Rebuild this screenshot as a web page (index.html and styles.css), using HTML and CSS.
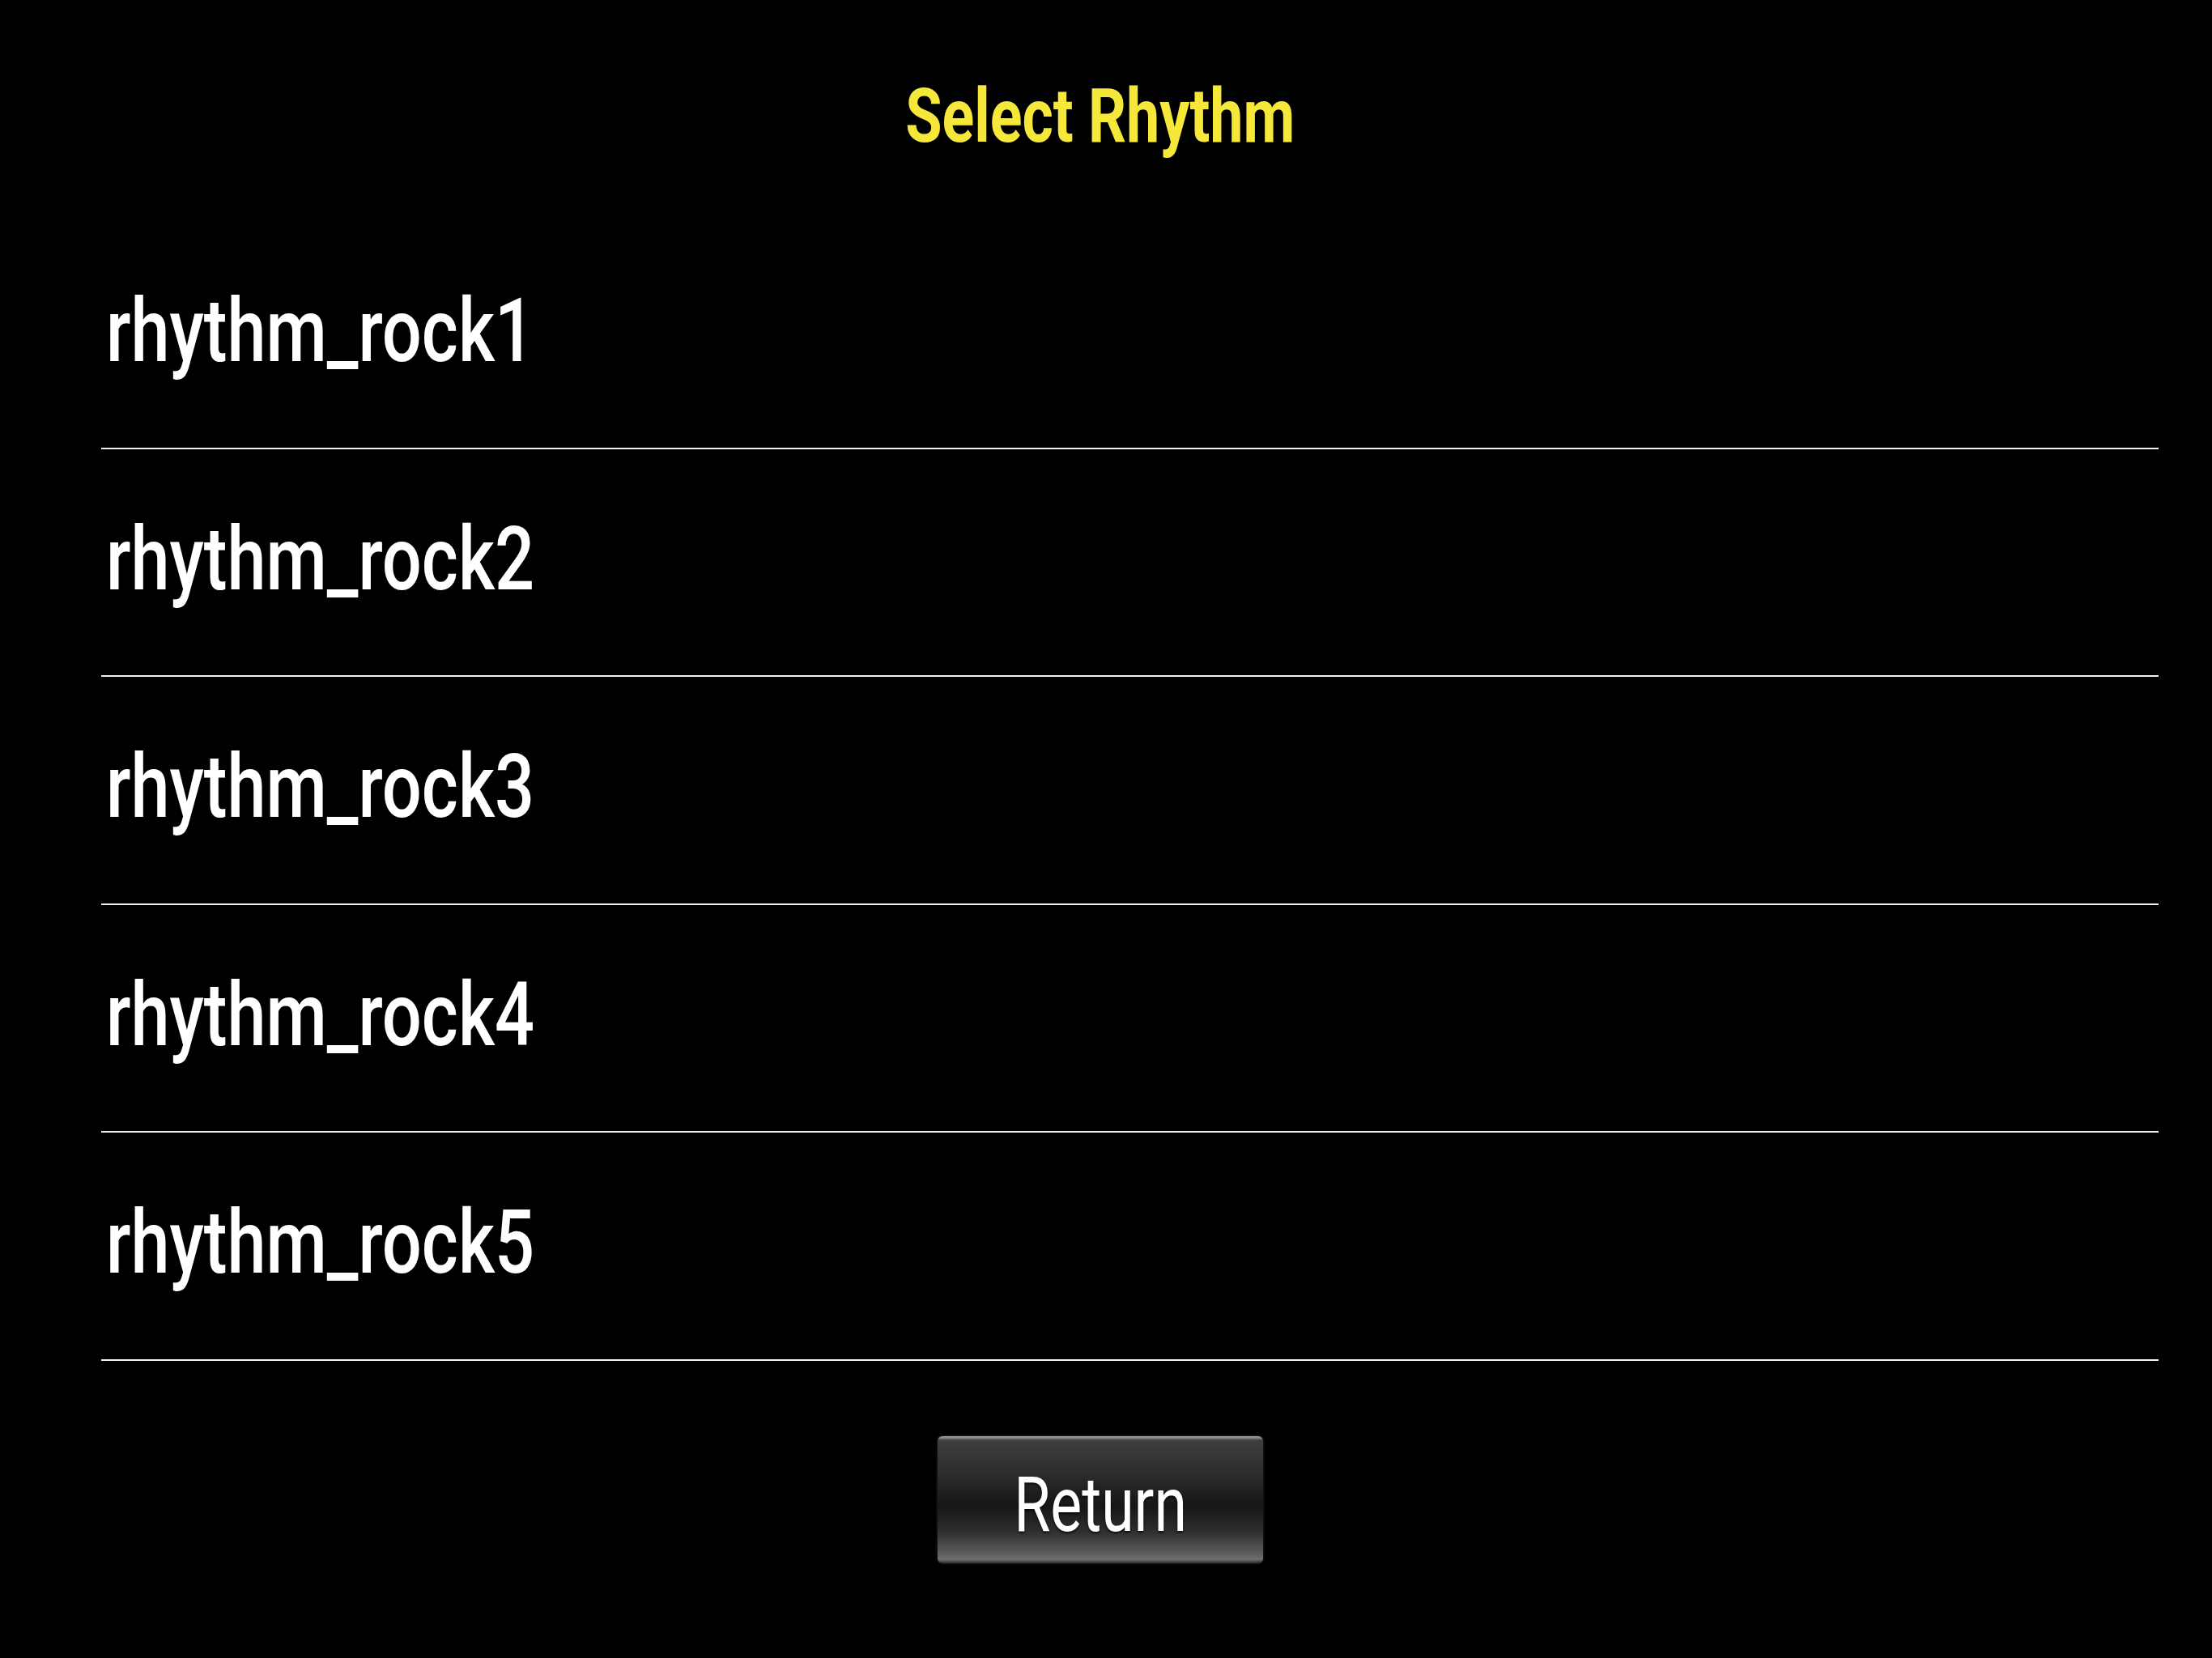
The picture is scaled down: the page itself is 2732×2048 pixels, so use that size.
FILE: index.html
```html
<!DOCTYPE html>
<html lang="en">
  <head>
    <meta charset="UTF-8" />
    <meta name="viewport" content="width=device-width, initial-scale=1.0" />
    <title>Select Rhythm</title>
    <link rel="stylesheet" href="styles.css">
  </head>
  <body>
    <div class="screen">
      <h1 class="title"><span>Select Rhythm</span></h1>
      <ul class="rhythm-list">
        <li class="rhythm-item"><span>rhythm_rock1</span></li>
        <li class="rhythm-item"><span>rhythm_rock2</span></li>
        <li class="rhythm-item"><span>rhythm_rock3</span></li>
        <li class="rhythm-item"><span>rhythm_rock4</span></li>
        <li class="rhythm-item"><span>rhythm_rock5</span></li>
      </ul>
      <div class="actions">
        <button class="return-btn" type="button"><span>Return</span></button>
      </div>
    </div>
  </body>
</html>
```

FILE: styles.css
```css
html, body {
  margin: 0;
  padding: 0;
  background: #000;
}

body {
  font-family: Roboto, "Liberation Sans", sans-serif;
  color: #fff;
  width: 2732px;
  height: 2048px;
  overflow: hidden;
}

.screen {
  display: flex;
  flex-direction: column;
}

.title {
  margin: 0;
  padding: 98px 14px 0 0;
  text-align: center;
  font-size: 92px;
  line-height: 1;
  font-weight: 700;
  color: #f5e83a;
}

.title span {
  display: inline-block;
  transform: scaleX(0.8);
  transform-origin: center;
}

.rhythm-list {
  list-style: none;
  margin: 83px 66px 0 125px;
  padding: 0;
}

.rhythm-item {
  padding: 81px 6px 88.5px;
  font-size: 110px;
  font-weight: 500;
  line-height: 1;
  border-bottom: 2px solid #f0f0f0;
  white-space: nowrap;
}

.rhythm-item span {
  display: inline-block;
  transform: scaleX(0.785);
  transform-origin: left center;
}

.actions {
  display: flex;
  justify-content: center;
  padding: 93px 14px 0 0;
}

.return-btn {
  width: 402px;
  height: 157px;
  padding: 38px 0 25px;
  border: none;
  border-radius: 6px;
  font-family: Roboto, "Liberation Sans", sans-serif;
  font-size: 94px;
  line-height: 1;
  color: #fff;
  text-shadow: 0 2px 3px rgba(0, 0, 0, 0.7);
  background: linear-gradient(to bottom,
    #9a9a9a 0, #8c8c8c 2px, #3e3e3e 5px, #2c2c2c 30%,
    #161616 55%, #2e2e2e 75%, #5c5c5c 92%, #6e6e6e 97%, #2a2a2a 100%);
  box-shadow: 0 0 3px rgba(90, 90, 90, 0.6);
}

.return-btn span {
  display: inline-block;
  transform: scaleX(0.78);
  transform-origin: center;
}
```
